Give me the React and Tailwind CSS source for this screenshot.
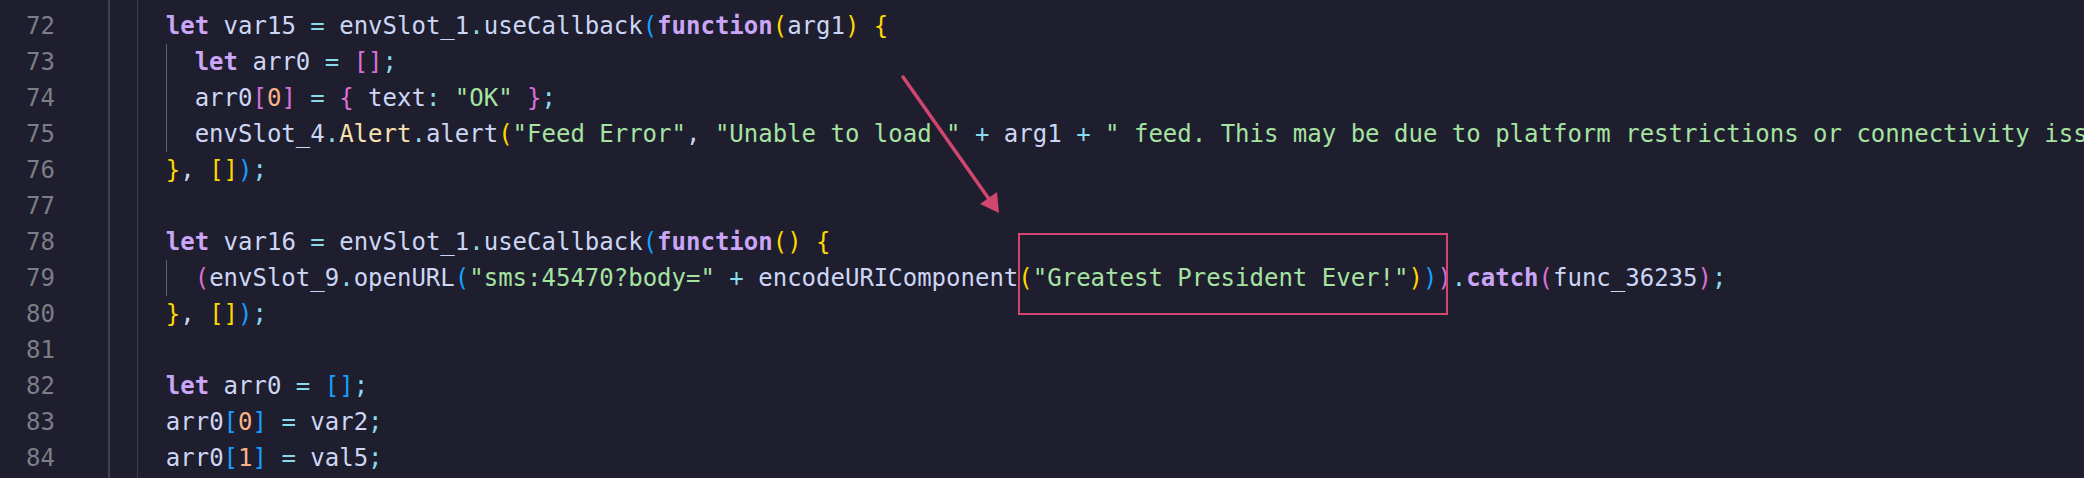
import React from "react";

// token colour classes
const C = {
  t: "text-[#cdd6f4]",
  k: "text-[#cba6f7] font-bold",
  o: "text-[#89dceb]",
  s: "text-[#a6e3a1]",
  n: "text-[#fab387]",
  c: "text-[#f9e2af]",
  g: "text-[#ffd700]",
  p: "text-[#da70d6]",
  b: "text-[#179fff]",
};

const lines = [
  { num: 72, indent: 4, tokens: [["k", "let"], ["t", " var15 "], ["o", "="], ["t", " envSlot_1"], ["o", "."], ["t", "useCallback"], ["b", "("], ["k", "function"], ["g", "("], ["t", "arg1"], ["g", ")"], ["t", " "], ["g", "{"]] },
  { num: 73, indent: 6, active: true, tokens: [["k", "let"], ["t", " arr0 "], ["o", "="], ["t", " "], ["p", "[]"], ["o", ";"]] },
  { num: 74, indent: 6, active: true, tokens: [["t", "arr0"], ["p", "["], ["n", "0"], ["p", "]"], ["t", " "], ["o", "="], ["t", " "], ["p", "{"], ["t", " text"], ["o", ":"], ["t", " "], ["s", "\"OK\""], ["t", " "], ["p", "}"], ["o", ";"]] },
  { num: 75, indent: 6, active: true, tokens: [["t", "envSlot_4"], ["o", "."], ["c", "Alert"], ["o", "."], ["t", "alert"], ["g", "("], ["s", "\"Feed Error\""], ["t", ", "], ["s", "\"Unable to load \""], ["t", " "], ["o", "+"], ["t", " arg1 "], ["o", "+"], ["t", " "], ["s", "\" feed. This may be due to platform restrictions or connectivity issues. Please try again later.\""], ["g", ")"], ["o", ";"]] },
  { num: 76, indent: 4, tokens: [["g", "}"], ["t", ", "], ["g", "[]"], ["b", ")"], ["o", ";"]] },
  { num: 77, indent: 4, tokens: [] },
  { num: 78, indent: 4, tokens: [["k", "let"], ["t", " var16 "], ["o", "="], ["t", " envSlot_1"], ["o", "."], ["t", "useCallback"], ["b", "("], ["k", "function"], ["g", "()"], ["t", " "], ["g", "{"]] },
  { num: 79, indent: 6, active: true, tokens: [["p", "("], ["t", "envSlot_9"], ["o", "."], ["t", "openURL"], ["b", "("], ["s", "\"sms:45470?body=\""], ["t", " "], ["o", "+"], ["t", " encodeURIComponent"], ["g", "("], ["s", "\"Greatest President Ever!\""], ["g", ")"], ["b", ")"], ["p", ")"], ["o", "."], ["k", "catch"], ["p", "("], ["t", "func_36235"], ["p", ")"], ["o", ";"]] },
  { num: 80, indent: 4, tokens: [["g", "}"], ["t", ", "], ["g", "[]"], ["b", ")"], ["o", ";"]] },
  { num: 81, indent: 4, tokens: [] },
  { num: 82, indent: 4, tokens: [["k", "let"], ["t", " arr0 "], ["o", "="], ["t", " "], ["b", "[]"], ["o", ";"]] },
  { num: 83, indent: 4, tokens: [["t", "arr0"], ["b", "["], ["n", "0"], ["b", "]"], ["t", " "], ["o", "="], ["t", " var2"], ["o", ";"]] },
  { num: 84, indent: 4, tokens: [["t", "arr0"], ["b", "["], ["n", "1"], ["b", "]"], ["t", " "], ["o", "="], ["t", " val5"], ["o", ";"]] },
];

const Guides = ({ active }) => (
  <>
    <span className="inline-block h-full w-[2ch] shrink-0 border-l-2 border-[#3e3f50]" />
    <span className="inline-block h-full w-[2ch] shrink-0 border-l border-[#3e3f50]" />
    {active && <span className="inline-block h-full w-[2ch] shrink-0 border-l border-[#5c5e72]" />}
  </>
);

const Row = ({ num, indent, active, tokens, className = "h-[36px]" }) => (
  <div className={`flex items-stretch ${className}`}>
    <span className="w-[55px] shrink-0 text-right text-[#7c7d85]">{num}</span>
    <span className="w-[53px] shrink-0" />
    <Guides active={active} />
    {indent === 6 && !active && <span className="inline-block w-[2ch] shrink-0" />}
    <span className="whitespace-pre">
      {tokens.map(([kind, text], i) => (
        <span key={i} className={C[kind]}>{text}</span>
      ))}
    </span>
  </div>
);

export default function App() {
  return (
    <div
      className="relative w-[2084px] h-[478px] overflow-hidden bg-[#1e1e2e] text-[24px] leading-[36px]"
      style={{ fontFamily: '"DejaVu Sans Mono", "Liberation Mono", monospace' }}
    >
      <Row num="" indent={4} tokens={[]} className="h-[8px]" />
      {lines.map((l) => (
        <Row key={l.num} {...l} />
      ))}
      <Row num="" indent={4} tokens={[]} />

      {/* annotation overlay */}
      <svg className="pointer-events-none absolute inset-0" width="2084" height="478">
        <line x1="903" y1="77" x2="989" y2="199" stroke="#d1466f" strokeWidth="3.5" strokeLinecap="round" />
        <polygon points="999,213 980,204 997,192" fill="#d1466f" />
        <rect x="1019" y="234" width="428" height="80" fill="none" stroke="#d1466f" strokeWidth="2" />
      </svg>
    </div>
  );
}
